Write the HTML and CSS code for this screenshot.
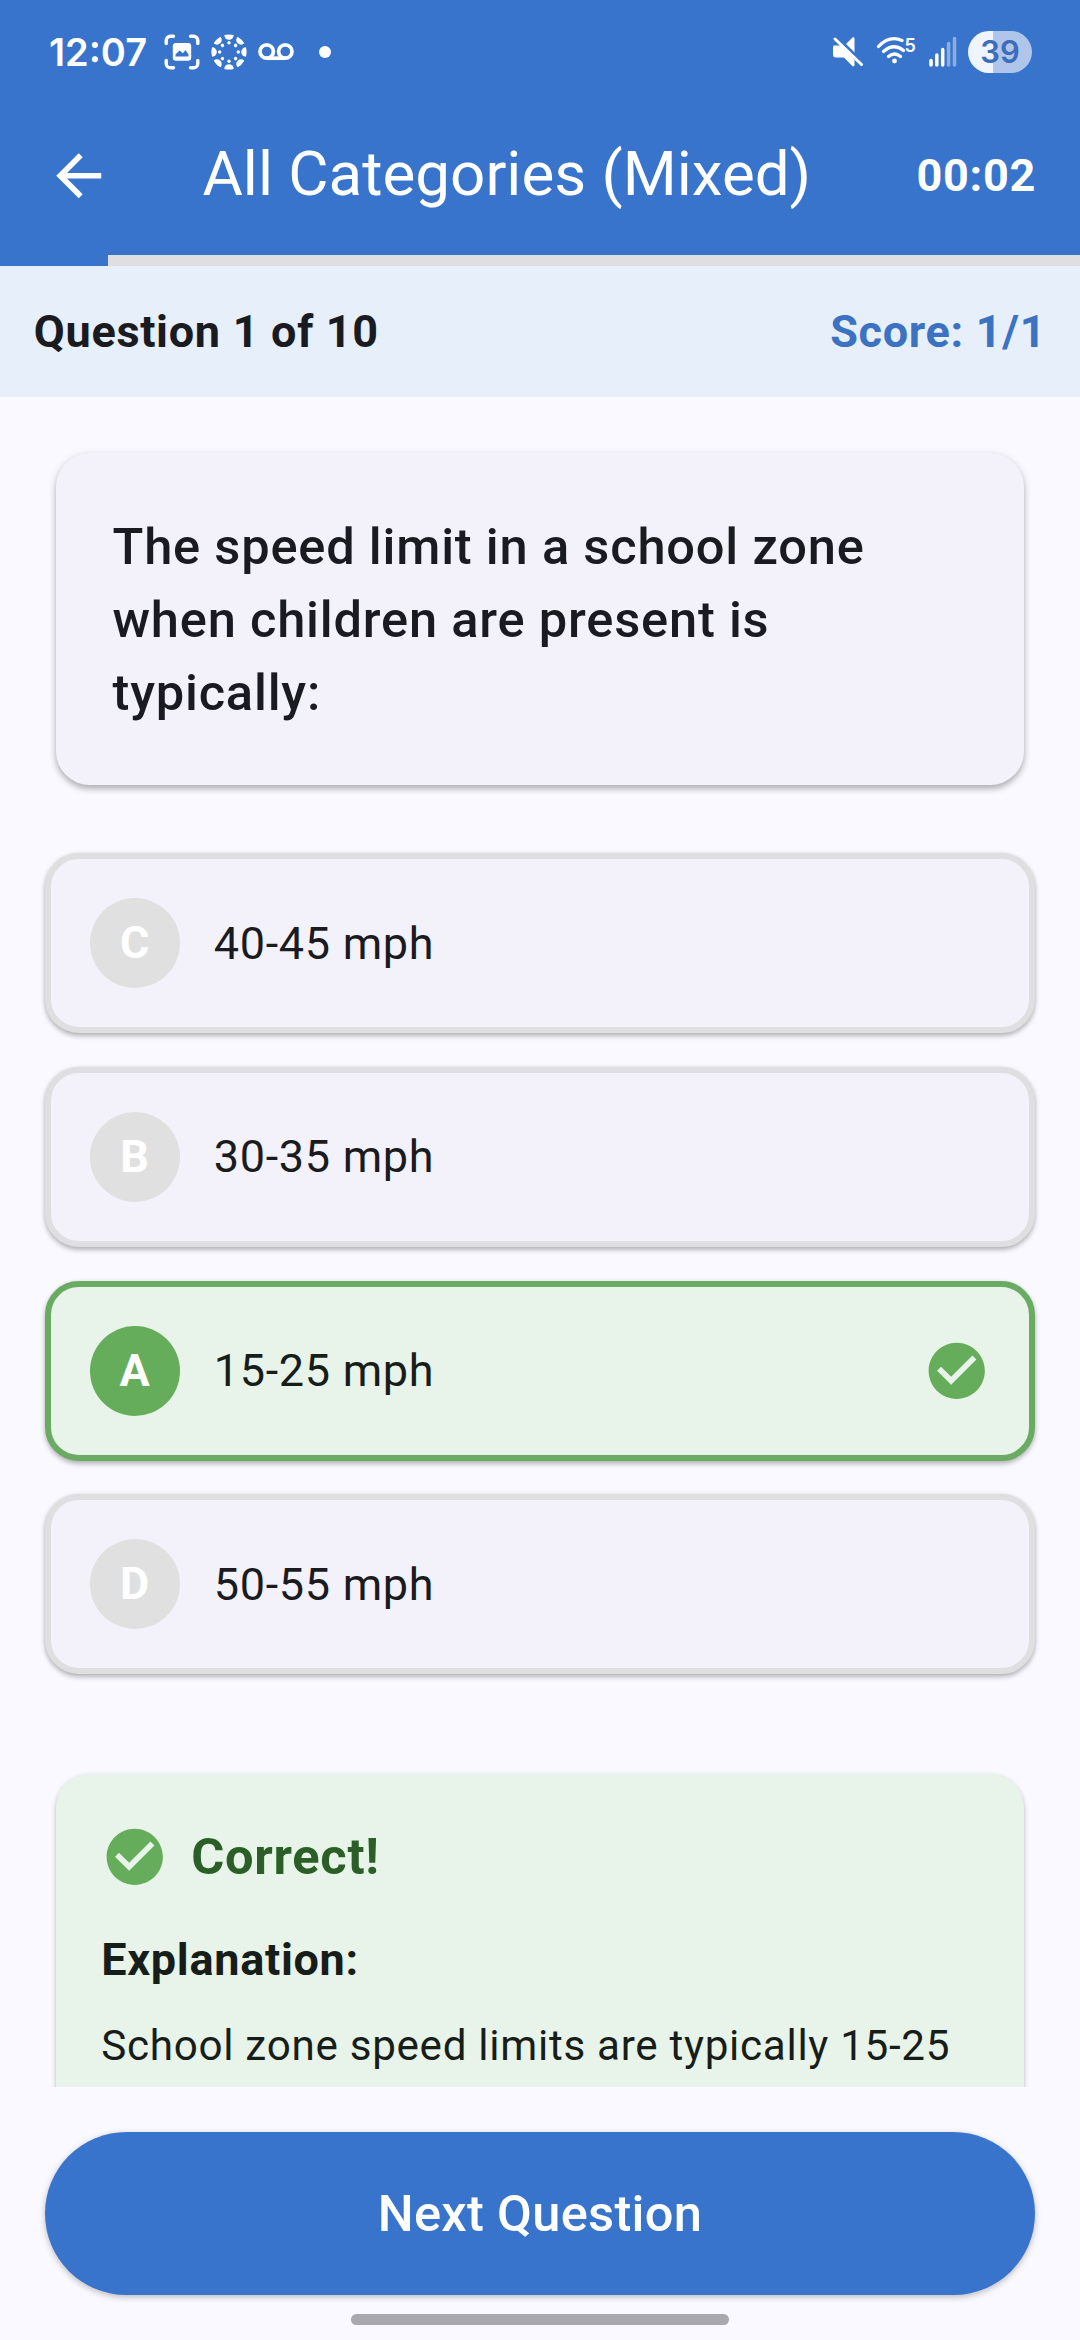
FILE: index.html
```
<!DOCTYPE html>
<html lang="en">
<head>
    <meta charset="UTF-8">
    <meta name="viewport" content="width=device-width, initial-scale=1.0">
    <title>All Categories (Mixed)</title>
    <link rel="stylesheet" href="styles.css">
</head>
<body>
    <div class="status-bar">
        <span class="clock">12:07</span>
        <div class="status-left">
            <svg width="36" height="36" viewBox="-18 -18 36 36" fill="none" stroke="#fff" stroke-width="3.4" stroke-linecap="round">
                <path d="M-15.8-8.5v-3a4.3 4.3 0 0 1 4.3-4.3h3M8.5-15.8h3a4.3 4.3 0 0 1 4.3 4.3v3M15.8 8.5v3a4.3 4.3 0 0 1-4.3 4.3h-3M-8.5 15.8h-3a4.3 4.3 0 0 1-4.3-4.3v-3"/>
                <path fill="#fff" stroke="none" fill-rule="evenodd" d="M-6-9H6a3.2 3.2 0 0 1 3.2 3.2V5.5A3.2 3.2 0 0 1 6 8.7H-6A3.2 3.2 0 0 1-9.2 5.5V-5.8A3.2 3.2 0 0 1-6-9zM-6.5 4.5H6.5V2.5L3.5-2 1 1.2-2.5-1.5-6.5 2.5z"/>
            </svg>
            <svg width="36" height="36" viewBox="-18 -18 36 36" fill="#fff">
                <defs>
                    <g id="spoke">
                        <path d="M-4.7-16.900A17.600 17.600 0 0 1 4.700-16.900A4.700 4.700 0 0 1-4.700-16.900z"/>
                        <circle cy="-9.300" r="1.700"/>
                    </g>
                </defs>
                <use href="#spoke"/>
                <use href="#spoke" transform="rotate(45)"/>
                <use href="#spoke" transform="rotate(90)"/>
                <use href="#spoke" transform="rotate(135)"/>
                <use href="#spoke" transform="rotate(180)"/>
                <use href="#spoke" transform="rotate(225)"/>
                <use href="#spoke" transform="rotate(270)"/>
                <use href="#spoke" transform="rotate(315)"/>
            </svg>
            <svg width="36" height="36" viewBox="-18 -18 36 36" fill="none" stroke="#fff" stroke-width="3.7">
                <circle cx="-9.3" cy="-.5" r="6.7"/>
                <circle cx="9.3" cy="-.5" r="6.7"/>
                <path d="M-9.3 6.2H9.3"/>
            </svg>
            <span class="dot"></span>
        </div>
        <div class="status-right">
            <svg width="32" height="32" viewBox="0 0 32 32">
                <path fill="#fff" d="M1.5 9.5h7L13 14l9.500 9.500V29a1.300 1.300 0 0 1-2.200 1L12 21.500H4A3 3 0 0 1 1 18.500v-7zM13.500 8.500L20.500 1.500A1.200 1.200 0 0 1 22.500 2.500V17z"/>
                <path stroke="#3874cb" stroke-width="3" d="M5 1L31 27"/>
                <path stroke="#fff" stroke-width="3" stroke-linecap="round" d="M3 3L29.500 28.500"/>
            </svg>
            <svg class="wifi" width="46" height="32" viewBox="0 0 46 32">
                <g fill="none" stroke="#fff" stroke-width="3.2" stroke-linecap="round">
                    <path d="M2.500 10.500Q13.500-1 26 4.500M7.500 15.500Q17.500 6.500 27.500 14.500M12.500 20.500Q18.500 15.500 24.500 20.500"/>
                </g>
                <circle cx="18.500" cy="25" r="2.400" fill="#fff"/>
                <text x="28.500" y="16" class="wifi-gen">5</text>
            </svg>
            <svg class="signal" width="28" height="32" viewBox="0 0 28 32" stroke="#fff" stroke-width="3.5" stroke-linecap="round">
                <path d="M2 24.500v4.500M7.800 19v10M13.700 13.500v15.500"/>
                <path stroke-opacity=".42" d="M19.600 7.500v21.500M25.500 2.500v26.500"/>
            </svg>
            <span class="battery">39</span>
        </div>
    </div>

    <header class="app-bar">
        <svg class="back" viewBox="0 0 24 24"><path fill="#fff" d="M20 11H7.830l5.590-5.590L12 4l-8 8 8 8 1.410-1.410L7.830 13H20v-2z"/></svg>
        <h1>All Categories (Mixed)</h1>
        <span class="timer">00:02</span>
    </header>

    <div class="progress"><div class="progress-fill" style="width: 10%"></div></div>

    <div class="info">
        <span>Question 1 of 10</span>
        <span class="score">Score: 1/1</span>
    </div>

    <main class="content">
        <div class="question">The speed limit in a school zone when children are present is typically:</div>

        <div class="options">
            <div class="option">
                <span class="letter">C</span>
                <span class="label">40-45 mph</span>
            </div>
            <div class="option">
                <span class="letter">B</span>
                <span class="label">30-35 mph</span>
            </div>
            <div class="option correct">
                <span class="letter">A</span>
                <span class="label">15-25 mph</span>
                <svg class="check" viewBox="0 0 24 24"><path d="M12 2C6.480 2 2 6.480 2 12s4.480 10 10 10 10-4.480 10-10S17.520 2 12 2zm-2 15l-5-5 1.410-1.410L10 14.170l7.590-7.590L19 8l-9 9z"/></svg>
            </div>
            <div class="option">
                <span class="letter">D</span>
                <span class="label">50-55 mph</span>
            </div>
        </div>

        <div class="explanation">
            <div class="result">
                <svg class="check" viewBox="0 0 24 24"><path d="M12 2C6.480 2 2 6.480 2 12s4.480 10 10 10 10-4.480 10-10S17.520 2 12 2zm-2 15l-5-5 1.410-1.410L10 14.170l7.590-7.590L19 8l-9 9z"/></svg>
                <span>Correct!</span>
            </div>
            <h2>Explanation:</h2>
            <p>School zone speed limits are typically 15-25</p>
        </div>
    </main>

    <footer class="footer">
        <button class="next">Next Question</button>
        <div class="home-bar"></div>
    </footer>
</body>
</html>
```

FILE: styles.css
```
* {
    box-sizing: border-box;
}

body {
    margin: 0;
    width: 1080px;
    height: 2340px;
    display: flex;
    flex-direction: column;
    overflow: hidden;
    background-color: #faf9ff;
    color: #1a1b21;
    font-family: Roboto, sans-serif;
    font-size: 45px;
    letter-spacing: 0.7px;
}

svg {
    display: block;
    flex-shrink: 0;
}

/* status bar */
.status-bar {
    height: 97px;
    padding: 7px 48px 0 49px;
    display: flex;
    align-items: center;
    background-color: #3874cb;
    color: #fff;
    font-family: Inter, sans-serif;
    font-weight: 600;
    letter-spacing: 0;
}

.clock {
    width: 115px;
    font-size: 38px;
    white-space: nowrap;
}

.status-left {
    display: flex;
    align-items: center;
    gap: 11px;
}

.dot {
    width: 12px;
    height: 12px;
    margin-left: 14px;
    border-radius: 50%;
    background-color: #fff;
}

.status-right {
    margin-left: auto;
    display: flex;
    align-items: center;
}

.wifi {
    margin-left: 12px;
}

.wifi-gen {
    fill: #fff;
    font-size: 18px;
    font-weight: 600;
}

.signal {
    margin-left: 7px;
}

.battery {
    width: 64px;
    height: 42px;
    margin-left: 11px;
    border-radius: 21px;
    background: linear-gradient(to right, #f0f5fd 39%, #b0c5ea 39%);
    color: #3c6dba;
    font-size: 31px;
    line-height: 42px;
    text-align: center;
}

/* header */
.app-bar {
    height: 157.5px;
    padding: 0 44px 0 45px;
    display: flex;
    align-items: center;
    background-color: #3874cb;
    color: #fff;
}

.back {
    width: 67.5px;
    height: 67.5px;
}

.app-bar h1 {
    margin: -3px 0 0 90px;
    font-size: 61.9px;
    font-weight: 400;
    letter-spacing: 0;
}

.timer {
    margin-left: auto;
    font-weight: 700;
}

.progress {
    height: 11.25px;
    background-color: #dfdfe1;
}

.progress-fill {
    height: 100%;
    background-color: #3874cb;
}

.info {
    height: 131.5px;
    padding: 0 33.75px;
    display: flex;
    align-items: center;
    justify-content: space-between;
    background-color: #e6effa;
    font-weight: 700;
}

.score {
    color: #3b72c2;
}

/* scrolling area */
.content {
    flex: 1;
    min-height: 0;
    padding: 56px 45px 0;
    overflow: hidden;
}

.question {
    margin: 0 11.25px;
    padding: 56.25px;
    border-radius: 33.75px;
    background-color: #f3f2fa;
    box-shadow: 0 4px 6px rgba(0, 0, 0, 0.26), 0 1px 9px rgba(0, 0, 0, 0.08);
    font-size: 50.6px;
    font-weight: 500;
    line-height: 73.1px;
    letter-spacing: 0.8px;
}

.options {
    margin-top: 68px;
    display: flex;
    flex-direction: column;
    gap: 33.75px;
}

.option {
    height: 180px;
    padding: 0 39px;
    display: flex;
    align-items: center;
    border: 6px solid #dfdfe2;
    border-radius: 33.75px;
    background-color: #f3f2fa;
    box-shadow: 0 3px 5px rgba(0, 0, 0, 0.26), 0 0 4px rgba(0, 0, 0, 0.08);
}

.letter {
    width: 90px;
    height: 90px;
    border-radius: 50%;
    background-color: #e0e0e0;
    color: #fff;
    font-weight: 700;
    line-height: 90px;
    text-align: center;
}

.label {
    flex: 1;
    margin-left: 33.75px;
}

.option.correct {
    border-color: #6aab64;
    background-color: #e8f4e9;
}

.correct .letter {
    background-color: #66ad5b;
}

.correct .label {
    color: #171d19;
}

.check {
    width: 67.5px;
    height: 67.5px;
    fill: #66ad5b;
}

.explanation {
    margin: 100px 11.25px 0;
    padding: 45px;
    border-radius: 33.75px;
    background-color: #e8f4e9;
    box-shadow: 0 2px 5px rgba(0, 0, 0, 0.26);
    color: #171d19;
}

.result {
    height: 74px;
    display: flex;
    align-items: center;
    gap: 22.5px;
    color: #2c5f28;
    font-size: 50.6px;
    font-weight: 700;
}

.explanation h2 {
    margin: 33px 0 22px;
    font-size: 45px;
    font-weight: 700;
    line-height: 67.5px;
}

.explanation p {
    margin: 0;
    font-size: 42.2px;
    line-height: 59px;
    white-space: nowrap;
}

/* bottom */
.footer {
    height: 253px;
    padding: 45px 45px 0;
}

.next {
    display: block;
    width: 100%;
    height: 163px;
    border: none;
    border-radius: 81.5px;
    background-color: #3874cb;
    box-shadow: 0 2px 6px rgba(0, 0, 0, 0.26);
    color: #fff;
    font-family: inherit;
    font-size: 50.6px;
    font-weight: 500;
    letter-spacing: 0.3px;
}

.home-bar {
    width: 378px;
    height: 11px;
    margin: 19px auto 0;
    border-radius: 6px;
    background-color: #a9a8ae;
}
```
